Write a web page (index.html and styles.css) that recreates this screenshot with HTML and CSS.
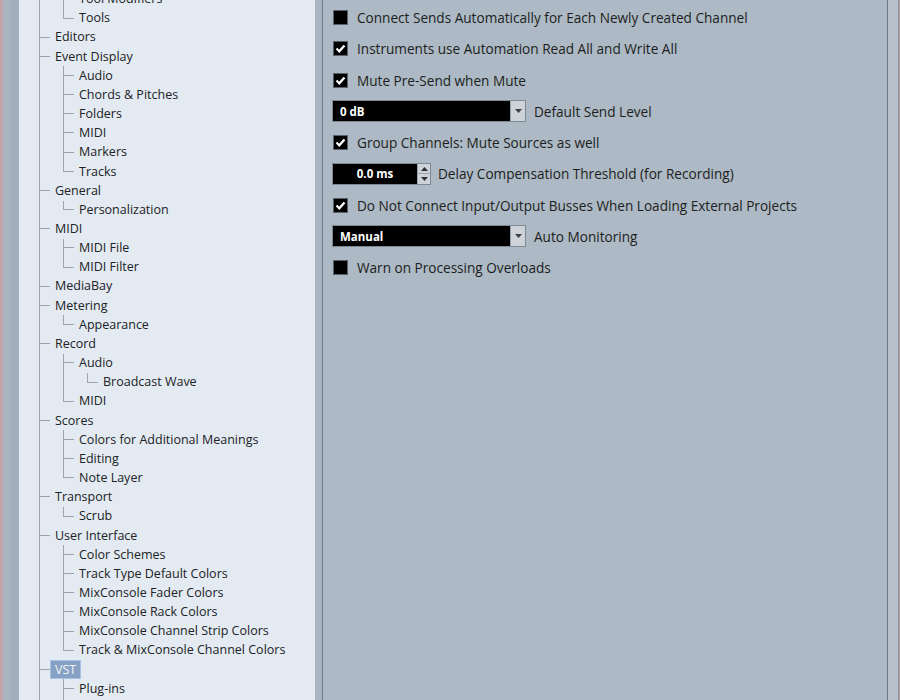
FILE: index.html
```html
<!DOCTYPE html>
<html>
<head>
<meta charset="utf-8">
<link rel="stylesheet" href="styles.css">
</head>
<body>
<div class="window">
  <div class="frame-left"><div class="strip-a"></div><div class="strip-b"></div></div>
  <div class="tree">
    <div class="tree-list">
      <div class="row"><span class="g on"></span><span class="c"><i></i><b></b></span><span class="lbl">Tool Modifiers</span></div>
      <div class="row"><span class="g on"></span><span class="c last"><i></i><b></b></span><span class="lbl">Tools</span></div>
      <div class="row"><span class="c"><i></i><b></b></span><span class="lbl">Editors</span></div>
      <div class="row"><span class="c"><i></i><b></b></span><span class="lbl">Event Display</span></div>
      <div class="row"><span class="g on"></span><span class="c"><i></i><b></b></span><span class="lbl">Audio</span></div>
      <div class="row"><span class="g on"></span><span class="c"><i></i><b></b></span><span class="lbl">Chords &amp; Pitches</span></div>
      <div class="row"><span class="g on"></span><span class="c"><i></i><b></b></span><span class="lbl">Folders</span></div>
      <div class="row"><span class="g on"></span><span class="c"><i></i><b></b></span><span class="lbl">MIDI</span></div>
      <div class="row"><span class="g on"></span><span class="c"><i></i><b></b></span><span class="lbl">Markers</span></div>
      <div class="row"><span class="g on"></span><span class="c last"><i></i><b></b></span><span class="lbl">Tracks</span></div>
      <div class="row"><span class="c"><i></i><b></b></span><span class="lbl">General</span></div>
      <div class="row"><span class="g on"></span><span class="c last"><i></i><b></b></span><span class="lbl">Personalization</span></div>
      <div class="row"><span class="c"><i></i><b></b></span><span class="lbl">MIDI</span></div>
      <div class="row"><span class="g on"></span><span class="c"><i></i><b></b></span><span class="lbl">MIDI File</span></div>
      <div class="row"><span class="g on"></span><span class="c last"><i></i><b></b></span><span class="lbl">MIDI Filter</span></div>
      <div class="row"><span class="c"><i></i><b></b></span><span class="lbl">MediaBay</span></div>
      <div class="row"><span class="c"><i></i><b></b></span><span class="lbl">Metering</span></div>
      <div class="row"><span class="g on"></span><span class="c last"><i></i><b></b></span><span class="lbl">Appearance</span></div>
      <div class="row"><span class="c"><i></i><b></b></span><span class="lbl">Record</span></div>
      <div class="row"><span class="g on"></span><span class="c"><i></i><b></b></span><span class="lbl">Audio</span></div>
      <div class="row"><span class="g on"></span><span class="g on"></span><span class="c last"><i></i><b></b></span><span class="lbl">Broadcast Wave</span></div>
      <div class="row"><span class="g on"></span><span class="c last"><i></i><b></b></span><span class="lbl">MIDI</span></div>
      <div class="row"><span class="c"><i></i><b></b></span><span class="lbl">Scores</span></div>
      <div class="row"><span class="g on"></span><span class="c"><i></i><b></b></span><span class="lbl">Colors for Additional Meanings</span></div>
      <div class="row"><span class="g on"></span><span class="c"><i></i><b></b></span><span class="lbl">Editing</span></div>
      <div class="row"><span class="g on"></span><span class="c last"><i></i><b></b></span><span class="lbl">Note Layer</span></div>
      <div class="row"><span class="c"><i></i><b></b></span><span class="lbl">Transport</span></div>
      <div class="row"><span class="g on"></span><span class="c last"><i></i><b></b></span><span class="lbl">Scrub</span></div>
      <div class="row"><span class="c"><i></i><b></b></span><span class="lbl">User Interface</span></div>
      <div class="row"><span class="g on"></span><span class="c"><i></i><b></b></span><span class="lbl">Color Schemes</span></div>
      <div class="row"><span class="g on"></span><span class="c"><i></i><b></b></span><span class="lbl">Track Type Default Colors</span></div>
      <div class="row"><span class="g on"></span><span class="c"><i></i><b></b></span><span class="lbl">MixConsole Fader Colors</span></div>
      <div class="row"><span class="g on"></span><span class="c"><i></i><b></b></span><span class="lbl">MixConsole Rack Colors</span></div>
      <div class="row"><span class="g on"></span><span class="c"><i></i><b></b></span><span class="lbl">MixConsole Channel Strip Colors</span></div>
      <div class="row"><span class="g on"></span><span class="c last"><i></i><b></b></span><span class="lbl">Track &amp; MixConsole Channel Colors</span></div>
      <div class="row"><span class="c"><i></i><b></b></span><span class="lbl sel">VST</span></div>
      <div class="row"><span class="g on"></span><span class="c"><i></i><b></b></span><span class="lbl">Plug-ins</span></div>
      <div class="row"><span class="g on"></span><span class="c"><i></i><b></b></span><span class="lbl"></span></div>
    </div>
  </div>
  <div class="splitter"></div>
  <div class="content">
    <div class="opt"><span class="cb"></span><span class="text">Connect Sends Automatically for Each Newly Created Channel</span></div>
    <div class="opt"><span class="cb"><svg viewBox="0 0 13 13" width="13" height="13"><polyline points="2.5,6.5 5.3,9.3 10.5,3.5" fill="none" stroke="#fff" stroke-width="2.2"/></svg></span><span class="text">Instruments use Automation Read All and Write All</span></div>
    <div class="opt"><span class="cb"><svg viewBox="0 0 13 13" width="13" height="13"><polyline points="2.5,6.5 5.3,9.3 10.5,3.5" fill="none" stroke="#fff" stroke-width="2.2"/></svg></span><span class="text">Mute Pre-Send when Mute</span></div>
    <div class="opt"><span class="dd"><span class="dd-val">0 dB</span><span class="dd-btn"><svg viewBox="0 0 7 4" width="7" height="4"><polygon points="0,0 7,0 3.5,4" fill="#3c3f44"/></svg></span></span><span class="text">Default Send Level</span></div>
    <div class="opt"><span class="cb"><svg viewBox="0 0 13 13" width="13" height="13"><polyline points="2.5,6.5 5.3,9.3 10.5,3.5" fill="none" stroke="#fff" stroke-width="2.2"/></svg></span><span class="text">Group Channels: Mute Sources as well</span></div>
    <div class="opt"><span class="spin"><span class="spin-val">0.0 ms</span><span class="spin-btns"><span class="sb"><svg viewBox="0 0 7 4" width="7" height="4"><polygon points="0,4 7,4 3.5,0" fill="#2c2f33"/></svg></span><span class="sb"><svg viewBox="0 0 7 4" width="7" height="4"><polygon points="0,0 7,0 3.5,4" fill="#2c2f33"/></svg></span></span></span><span class="text">Delay Compensation Threshold (for Recording)</span></div>
    <div class="opt"><span class="cb"><svg viewBox="0 0 13 13" width="13" height="13"><polyline points="2.5,6.5 5.3,9.3 10.5,3.5" fill="none" stroke="#fff" stroke-width="2.2"/></svg></span><span class="text">Do Not Connect Input/Output Busses When Loading External Projects</span></div>
    <div class="opt"><span class="dd"><span class="dd-val">Manual</span><span class="dd-btn"><svg viewBox="0 0 7 4" width="7" height="4"><polygon points="0,0 7,0 3.5,4" fill="#3c3f44"/></svg></span></span><span class="text">Auto Monitoring</span></div>
    <div class="opt"><span class="cb"></span><span class="text">Warn on Processing Overloads</span></div>
  </div>
  <div class="frame-right"><div class="fr-a"></div><div class="fr-b"></div></div>
</div>
</body>
</html>
```

FILE: styles.css
```css
html, body {
  margin: 0;
  padding: 0;
}
body {
  width: 900px;
  height: 700px;
  overflow: hidden;
  background: #c3a4a8;
  font-family: "Open Sans", "Noto Sans", sans-serif;
  color: #1d1f22;
}
.window {
  display: flex;
  height: 700px;
  padding-left: 3px;
  box-sizing: border-box;
}
.frame-left {
  display: flex;
  flex: none;
}
.strip-a { width: 7px; background: #a8b4c0; }
.strip-b { width: 9px; background: #a2aebb; }

.tree {
  flex: none;
  width: 296px;
  background: #e4eaf1;
  overflow: hidden;
}
.tree-list {
  margin-top: -10.2px;
  padding-left: 20px;
  font-size: 12.5px;
}
.row {
  display: flex;
  align-items: stretch;
  height: 19.17px;
  white-space: nowrap;
}
.g {
  flex: none;
  width: 24px;
  box-sizing: border-box;
}
.g.on { border-left: 1px solid #9ba5b0; }
.c {
  flex: none;
  width: 11px;
  display: flex;
  flex-direction: column;
}
.c i {
  display: block;
  height: 50%;
  box-sizing: border-box;
  border-left: 1px solid #9ba5b0;
  border-bottom: 1px solid #9ba5b0;
}
.c b {
  display: block;
  flex: 1;
  border-left: 1px solid #9ba5b0;
}
.c.last b { border-left-color: transparent; }
.lbl {
  display: flex;
  align-items: center;
  padding: 0 4px;
  border: 1px solid transparent;
  line-height: 1;
  color: #202226;
}
.lbl.sel {
  background: #86a1c3;
  border-color: #a6c2e4;
  color: #f2f5f9;
}

.splitter {
  flex: none;
  width: 7px;
  background: #a9b5c1;
  border-right: 1px solid #6f7a86;
}
.content {
  flex: 1;
  background: #adb9c4;
  padding: 2px 0 0 9px;
  font-size: 13.6px;
}
.opt {
  display: flex;
  align-items: center;
  height: 31.25px;
  white-space: nowrap;
}
.cb {
  flex: none;
  width: 15px;
  height: 15px;
  box-sizing: border-box;
  margin-left: 1px;
  margin-right: 9px;
  background: #000;
  border: 1px solid #59626c;
  display: flex;
  align-items: center;
  justify-content: center;
}
.cb svg { display: block; }
.dd {
  flex: none;
  width: 194px;
  height: 22px;
  box-sizing: border-box;
  border: 1px solid #7d8893;
  background: #000;
  display: flex;
  align-items: center;
  margin-right: 8px;
}
.dd-val {
  flex: 1;
  padding-left: 7px;
  color: #fff;
  font-weight: 700;
  font-size: 11.5px;
}
.dd-btn {
  flex: none;
  width: 14px;
  height: 20px;
  background: #cdd3d9;
  border-left: 1px solid #9aa3ac;
  display: flex;
  align-items: center;
  justify-content: center;
}
.dd-btn svg { display: block; }
.spin {
  flex: none;
  width: 99px;
  height: 22px;
  box-sizing: border-box;
  border: 1px solid #7d8893;
  background: #000;
  display: flex;
  margin-right: 7px;
}
.spin-val {
  flex: 1;
  display: flex;
  align-items: center;
  justify-content: center;
  color: #fff;
  font-weight: 700;
  font-size: 11.5px;
}
.spin-btns {
  flex: none;
  width: 12px;
  display: flex;
  flex-direction: column;
  background: #cdd3d9;
  border-left: 1px solid #9aa3ac;
}
.sb {
  flex: 1;
  display: flex;
  align-items: center;
  justify-content: center;
}
.sb + .sb { border-top: 1px solid #9aa3ac; }
.sb svg { display: block; }
.text { color: #1c1e21; }

.frame-right {
  flex: none;
  display: flex;
  width: 13px;
}
.fr-a {
  width: 10px;
  background: #b6c1cc;
  border-left: 1px solid #6d7884;
  border-right: 1px solid #8e98a3;
}
.fr-b { flex: 1; background: #b39a9e; }
```
